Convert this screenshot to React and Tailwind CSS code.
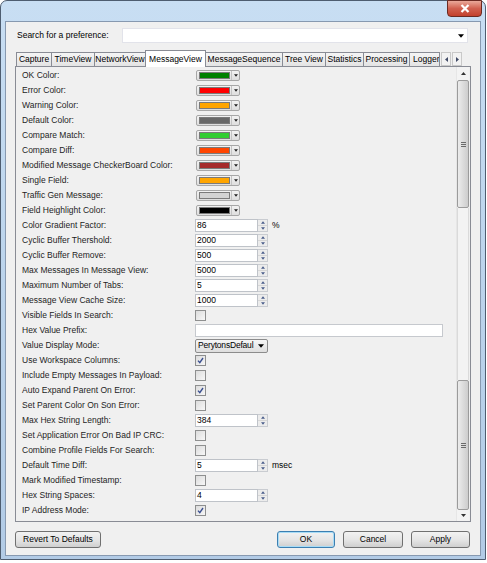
import React from "react";

const FONT = "font-['Liberation_Sans',Arial,sans-serif]";

const colorRows = [
  { label: "OK Color:", swatch: "bg-[#008000]" },
  { label: "Error Color:", swatch: "bg-[#ff0000]" },
  { label: "Warning Color:", swatch: "bg-[#ffa500]" },
  { label: "Default Color:", swatch: "bg-[#696969]" },
  { label: "Compare Match:", swatch: "bg-[#32cd32]" },
  { label: "Compare Diff:", swatch: "bg-[#ff4500]" },
  { label: "Modified Message CheckerBoard Color:", swatch: "bg-[#a52a2a]" },
  { label: "Single Field:", swatch: "bg-[#ffa500]" },
  { label: "Traffic Gen Message:", swatch: "bg-[#d3d3d3]" },
  { label: "Field Heighlight Color:", swatch: "bg-[#000000]" },
];

const otherRows = [
  { label: "Color Gradient Factor:", type: "spin", value: "86", unit: "%" },
  { label: "Cyclic Buffer Thershold:", type: "spin", value: "2000" },
  { label: "Cyclic Buffer Remove:", type: "spin", value: "500" },
  { label: "Max Messages In Message View:", type: "spin", value: "5000" },
  { label: "Maximum Number of Tabs:", type: "spin", value: "5" },
  { label: "Message View Cache Size:", type: "spin", value: "1000" },
  { label: "Visible Fields In Search:", type: "check", checked: false },
  { label: "Hex Value Prefix:", type: "text" },
  { label: "Value Display Mode:", type: "combo", value: "PerytonsDefaul" },
  { label: "Use Workspace Columns:", type: "check", checked: true },
  { label: "Include Empty Messages In Payload:", type: "check", checked: false },
  { label: "Auto Expand Parent On Error:", type: "check", checked: true },
  { label: "Set Parent Color On Son Error:", type: "check", checked: false },
  { label: "Max Hex String Length:", type: "spin", value: "384" },
  { label: "Set Application Error On Bad IP CRC:", type: "check", checked: false },
  { label: "Combine Profile Fields For Search:", type: "check", checked: false },
  { label: "Default Time Diff:", type: "spin", value: "5", unit: "msec" },
  { label: "Mark Modified Timestamp:", type: "check", checked: false },
  { label: "Hex String Spaces:", type: "spin", value: "4" },
  { label: "IP Address Mode:", type: "check", checked: true },
];

const tabs = [
  { name: "Capture", w: "w-[36px]" },
  { name: "TimeView", w: "w-[44px]" },
  { name: "NetworkView", w: "w-[52px]" },
  { name: "MessageView", w: "w-[61px]", active: true },
  { name: "MessageSequence", w: "w-[78px]" },
  { name: "Tree View", w: "w-[44px]" },
  { name: "Statistics", w: "w-[39px]" },
  { name: "Processing", w: "w-[47px]" },
  { name: "Logger", w: "w-[31px]" },
];

const Arrow = ({ dir = "down", className = "" }) => (
  <svg width="5" height="3" viewBox="0 0 5 3" className={className}>
    {dir === "down" ? (
      <polygon points="0,0 5,0 2.5,3" fill="currentColor" />
    ) : (
      <polygon points="0,3 5,3 2.5,0" fill="currentColor" />
    )}
  </svg>
);

const ColorCombo = ({ swatch }) => (
  <div className="ml-[1px] w-[44px] h-[11px] border border-[#a7a7a7] rounded-[2px] bg-gradient-to-b from-[#f3f3f3] to-[#dedede] flex items-center pl-[2px]">
    <div className={`w-[31px] h-[7px] border border-[#7a7a7a] ${swatch}`} />
    <div className="ml-[1px] h-full flex-1 border-l border-[#c4c4c4] flex items-center justify-center text-[#222]">
      <Arrow className="w-[4px] h-[3px]" />
    </div>
  </div>
);

const SpinBox = ({ value, unit }) => (
  <div className="flex items-center">
    <div className="w-[63px] h-[13px] border border-[#bfc3c9] bg-white flex items-center pl-[1px] text-black leading-none">
      {value}
    </div>
    <div className="w-[10px] h-[13px] border border-l-0 border-[#c9ccd1] bg-[#ececec] flex flex-col">
      <div className="flex-1 flex items-center justify-center text-[#4a5d8a] border-b border-[#d6d6d6]">
        <Arrow dir="up" className="w-[4px] h-[3px]" />
      </div>
      <div className="flex-1 flex items-center justify-center text-[#4a5d8a]">
        <Arrow className="w-[4px] h-[3px]" />
      </div>
    </div>
    {unit && <span className="ml-[4px] text-black">{unit}</span>}
  </div>
);

const CheckBox = ({ checked }) => (
  <div className="w-[11px] h-[11px] border border-[#8e8f8f] bg-gradient-to-br from-[#dcdcdc] to-[#f7f7f7] flex items-center justify-center">
    {checked && (
      <svg width="7" height="7" viewBox="0 0 7 7">
        <path d="M1 3.6 L2.8 5.6 L6 1" stroke="#3a4f90" strokeWidth="1.4" fill="none" />
      </svg>
    )}
  </div>
);

const Control = ({ row }) => {
  if (row.type === "spin") return <SpinBox value={row.value} unit={row.unit} />;
  if (row.type === "check") return <CheckBox checked={row.checked} />;
  if (row.type === "text")
    return <div className="w-[248px] h-[13px] border border-[#c6c9ce] bg-white" />;
  return (
    <div className="w-[73px] h-[14px] border border-[#8c8c8c] rounded-[2px] bg-gradient-to-b from-[#f6f6f6] to-[#dedede] flex items-center pl-[2px] pr-[3px] justify-between text-black">
      <span className="whitespace-nowrap tracking-[-0.2px]">{row.value}</span>
      <Arrow className="w-[6px] h-[4px]" />
    </div>
  );
};

const Row = ({ label, children }) => (
  <div className="h-[15px] flex items-center">
    <div className="w-[173px] shrink-0 text-[#1e1e1e] whitespace-nowrap">{label}</div>
    {children}
  </div>
);

const ScrollThumb = ({ h }) => (
  <div className={`${h} rounded-[2px] border border-[#9b9b9b] bg-gradient-to-r from-[#ececec] via-[#dcdcdc] to-[#cdcdcd] flex flex-col items-center justify-center gap-[1px]`}>
    <div className="w-[5px] h-[1px] bg-[#6a6a6a]" />
    <div className="w-[5px] h-[1px] bg-[#6a6a6a]" />
    <div className="w-[5px] h-[1px] bg-[#6a6a6a]" />
  </div>
);

const Button = ({ children, w, focus }) => (
  <div
    className={`${w} h-[17px] rounded-[3px] border ${
      focus ? "border-[#3c7fb1] shadow-[inset_0_0_0_1px_#a8dcf6]" : "border-[#707070]"
    } bg-gradient-to-b from-[#f2f2f2] via-[#e6e6e6] to-[#cfcfcf] flex items-center justify-center text-black`}
  >
    {children}
  </div>
);

export default function App() {
  return (
    <div className={`w-[487px] h-[563px] bg-white text-[8.5px] ${FONT}`}>
      <div className="relative w-[486px] h-[560px] rounded-t-[7px] border border-[#4e5d70] bg-gradient-to-b from-[#c8def3] via-[#bcd4ec] to-[#b2cbe6] flex flex-col">
        {/* close button */}
        <div className="absolute right-[3px] top-[-1px] w-[35px] h-[17px] rounded-b-[4px] border border-[#6b2a22] bg-gradient-to-b from-[#e9a99a] via-[#d0604f] to-[#c2402c] flex items-center justify-center">
          <svg width="10" height="9" viewBox="0 0 10 9">
            <path d="M1.5 1 L8.5 8 M8.5 1 L1.5 8" stroke="#fff" strokeWidth="2.2" />
          </svg>
        </div>
        <div className="h-[20px] shrink-0" />

        <div className="mx-[4px] mb-[3px] flex-1 border border-[#8799b0] bg-[#f0f0f0] flex flex-col">
          {/* search */}
          <div className="mt-[6px] h-[15px] flex items-center">
            <div className="pl-[11px] w-[116px] text-black">Search for a preference:</div>
            <div className="w-[346px] h-[15px] bg-white border border-[#e2e3ea] flex items-center justify-end pr-[3px] text-black">
              <Arrow className="w-[6px] h-[4px]" />
            </div>
          </div>

          {/* tabs */}
          <div className="mt-[7px] ml-[10px] h-[16px] flex items-end relative z-10">
            {tabs.map((t) =>
              t.active ? (
                <div
                  key={t.name}
                  className={`${t.w} h-[17px] -mb-[1px] -ml-[1px] border border-b-0 border-[#898c95] bg-white flex items-center justify-center text-black whitespace-nowrap overflow-hidden`}
                >
                  {t.name}
                </div>
              ) : (
                <div
                  key={t.name}
                  className={`${t.w} h-[14px] border border-[#898c95] border-b-0 -ml-[1px] first:ml-0 bg-gradient-to-b from-[#f5f5f5] to-[#e4e4e4] flex items-center ${
                    t.name === "Logger" ? "justify-start pl-[3px]" : "justify-center"
                  } text-black whitespace-nowrap overflow-hidden`}
                >
                  {t.name}
                </div>
              )
            )}
            <div className="ml-[1px] w-[10px] h-[14px] border border-[#c9c9c9] bg-[#f2f2f2] flex items-center justify-center text-[#404a66]">
              <svg width="3" height="5" viewBox="0 0 3 5"><polygon points="3,0 3,5 0,2.5" fill="currentColor" /></svg>
            </div>
            <div className="ml-[1px] w-[10px] h-[14px] border border-[#c9c9c9] bg-[#f2f2f2] flex items-center justify-center text-[#404a66]">
              <svg width="3" height="5" viewBox="0 0 3 5"><polygon points="0,0 0,5 3,2.5" fill="currentColor" /></svg>
            </div>
          </div>

          {/* panel */}
          <div className="ml-[9px] w-[456px] h-[456px] border border-[#898c95] bg-[#f0f0f0] flex">
            <div className="flex-1 pl-[6px] pt-[1px]">
              {colorRows.map((r) => (
                <Row key={r.label} label={r.label}>
                  <ColorCombo swatch={r.swatch} />
                </Row>
              ))}
              {otherRows.map((r) => (
                <Row key={r.label} label={r.label}>
                  <Control row={r} />
                </Row>
              ))}
            </div>
            <div className="w-[13px] mr-[1px] flex flex-col bg-[#f3f3f3] border-l border-[#e6e6e6]">
              <div className="h-[13px] flex items-center justify-center text-[#333]">
                <Arrow dir="up" />
              </div>
              <ScrollThumb h="h-[128px]" />
              <div className="flex-1 border-x border-[#dadada]" />
              <ScrollThumb h="h-[130px]" />
              <div className="h-[11px] flex items-center justify-center text-[#333]">
                <Arrow />
              </div>
            </div>
          </div>

          {/* buttons */}
          <div className="mt-[9px] ml-[9px] mr-[10px] flex items-center">
            <Button w="w-[86px]">Revert To Defaults</Button>
            <div className="flex-1" />
            <Button w="w-[58px]" focus>OK</Button>
            <div className="w-[8px]" />
            <Button w="w-[60px]">Cancel</Button>
            <div className="w-[8px]" />
            <Button w="w-[59px]">Apply</Button>
          </div>
        </div>
      </div>
    </div>
  );
}
